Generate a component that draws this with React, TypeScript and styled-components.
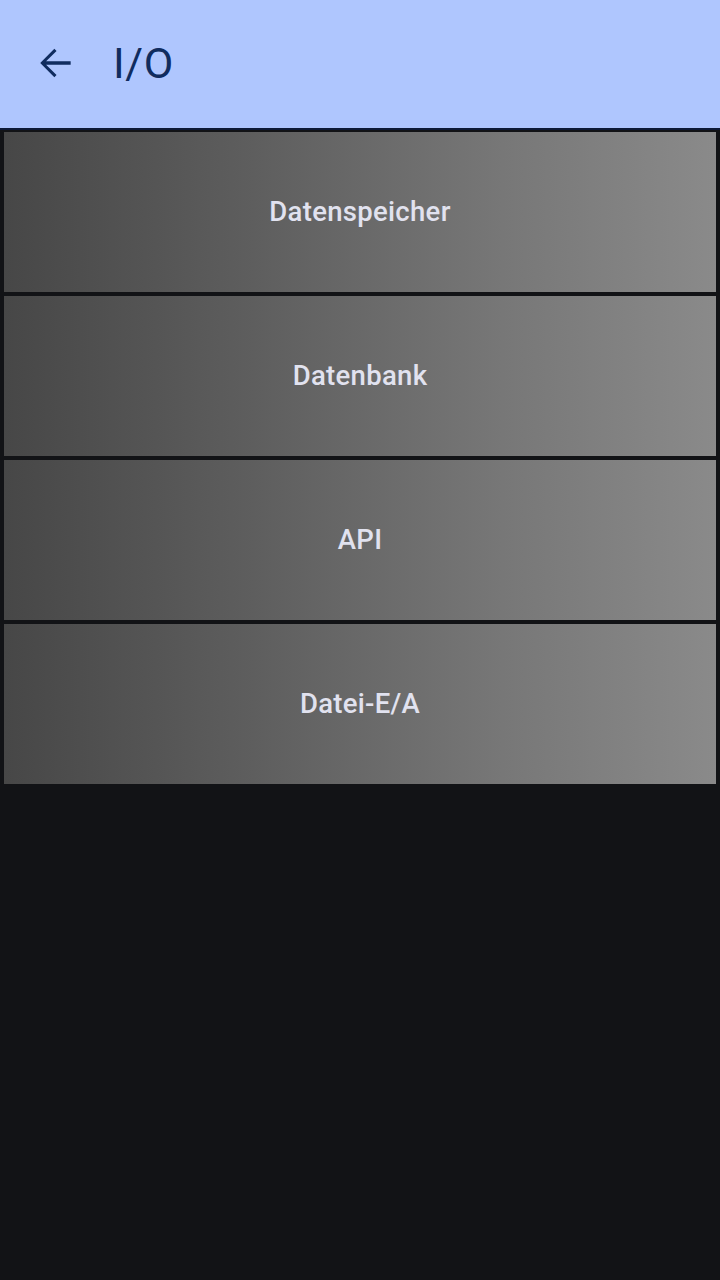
import React from "react";
import styled, { createGlobalStyle } from "styled-components";

const Global = createGlobalStyle`
  html, body { margin: 0; padding: 0; background: #121316; }
  body { font-family: Roboto, "Noto Sans", sans-serif; }
  #root { min-height: 1280px; background: #121316; }
`;

const Page = styled.div`
  width: 720px;
  min-height: 1280px;
  background: #121316;
  display: flex;
  flex-direction: column;
`;

const TopBar = styled.header`
  height: 130px;
  box-sizing: border-box;
  background: #afc6fe;
  border-bottom: 2px solid #0d1a38;
  display: flex;
  align-items: center;
  padding-left: 34px;
  padding-bottom: 2px;
  gap: 35px;
`;

const BackButton = styled.button`
  width: 44px;
  height: 44px;
  padding: 0;
  border: none;
  background: transparent;
  display: flex;
  align-items: center;
  justify-content: center;
  color: #102c5f;
`;

const Title = styled.h1`
  margin: 0;
  font-family: Roboto, sans-serif;
  font-weight: 400;
  font-size: 43px;
  color: #102c5f;
  letter-spacing: 0.6px;
`;

const List = styled.div`
  display: flex;
  flex-direction: column;
  gap: 4px;
  padding: 2px 4px 0 4px;
`;

const Card = styled.button`
  height: 160px;
  width: 100%;
  border: none;
  padding: 0 0 2px 0;
  background: linear-gradient(to right, #474747 0%, #5e5e5e 35%, #777777 70%, #8a8a8a 100%);
  display: flex;
  align-items: center;
  justify-content: center;
  font-family: Roboto, sans-serif;
  font-weight: 500;
  font-size: 27.5px;
  color: #e1e2ef;
  letter-spacing: 0.3px;
`;

const items = ["Datenspeicher", "Datenbank", "API", "Datei-E/A"];

export default function App() {
  return (
    <Page>
      <Global />
      <TopBar>
        <BackButton aria-label="Zurück">
          <svg width="44" height="44" viewBox="0 0 24 24">
            <path d="M20 11.1H6.6l5.7-5.7-1.2-1.2L3.4 12l7.7 7.8 1.2-1.2-5.7-5.7H20v-1.8z" fill="currentColor" />
          </svg>
        </BackButton>
        <Title>I/O</Title>
      </TopBar>
      <List>
        {items.map((t) => (
          <Card key={t}>{t}</Card>
        ))}
      </List>
    </Page>
  );
}
